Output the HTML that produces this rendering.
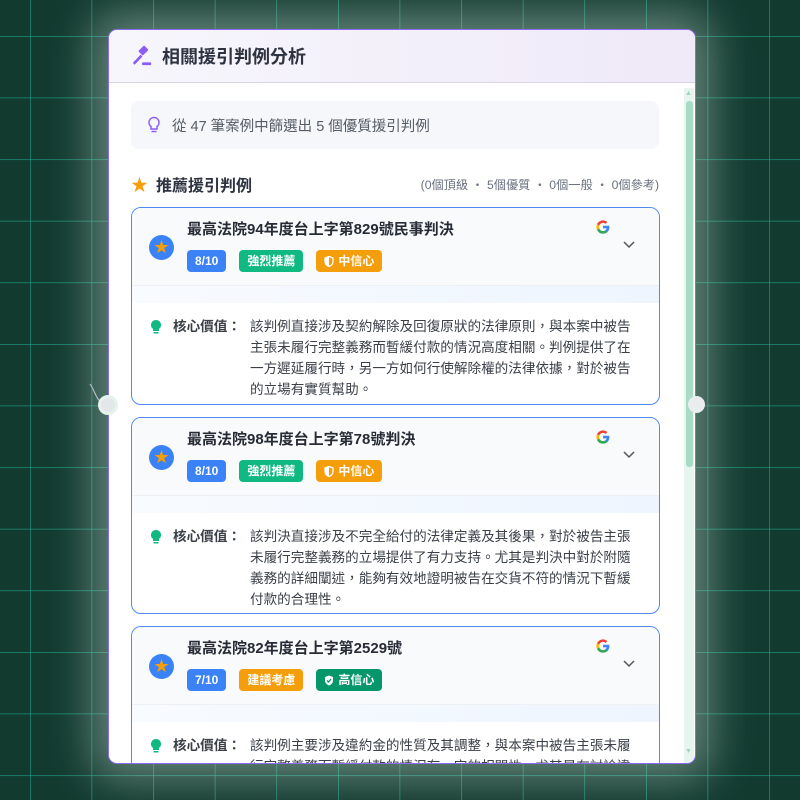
<!DOCTYPE html>
<html><head><meta charset="utf-8">
<style>
*{box-sizing:border-box;margin:0;padding:0}
body{width:800px;height:800px;overflow:hidden;background:#123a2f;font-family:"Liberation Sans","Noto Sans CJK TC",sans-serif;position:relative}
.bg{position:absolute;inset:0}
.panel{position:absolute;left:108px;top:29px;width:588px;height:735px;background:#fff;border:1px solid #8b6cf0;border-radius:9px;overflow:hidden;box-shadow:0 0 44px 16px rgba(220,240,230,.4)}
.hdr{height:53px;background:linear-gradient(90deg,#f7f6fc,#efe9f8);border-bottom:1px solid #d9d6e0;display:flex;align-items:center;padding-left:22px}
.hdr h1{font-size:18px;font-weight:bold;color:#2d3340;margin-left:9px}
.info{position:absolute;left:22px;top:71px;width:528px;height:48px;background:#f5f7fa;border-radius:8px;display:flex;align-items:center;padding-left:16px;font-size:14.5px;color:#555c66}
.sec{position:absolute;left:22px;top:141px;width:528px;display:flex;align-items:center}
.sec b{font-size:16px;color:#2d3340;margin-left:8px}
.sec span{margin-left:auto;font-size:12.2px;color:#6b7280}
.card{position:absolute;left:22px;width:529px;border:1px solid #4f8af0;border-radius:10px;overflow:hidden;background:#fff}
.ch{height:78px;background:#f8fafc;position:relative;border-bottom:1px solid #eef0f4}
.strip{height:17px;background:linear-gradient(90deg,#f8fbff,#eef5ff)}
.title{position:absolute;left:55px;top:10px;font-size:15px;font-weight:bold;color:#262b35}
.sc{position:absolute;left:17px;top:27px;width:25px;height:25px;border-radius:50%;background:#3b82f6;color:#f59e0b;font-size:15px;text-align:center;line-height:25px}
.badges{position:absolute;left:55px;top:42px;display:flex}
.bd{height:22px;border-radius:4px;color:#fff;font-size:12px;font-weight:bold;line-height:22px;padding:0 8px;margin-right:13px;display:flex;align-items:center}
.bd svg{margin-right:4px}
.g{position:absolute;right:48px;top:11px;width:16px;height:16px}
.chev{position:absolute;right:24px;top:33px}
.body{position:relative;padding:13px 0 0 118px;font-size:13.6px;line-height:21px;color:#3a3f48;height:100px}
.lab{position:absolute;left:41px;top:13px;font-weight:bold;color:#3a3f48}
.bulb{position:absolute;left:19px;top:17px}
</style></head><body>
<svg class="bg" width="800" height="800"><defs><pattern id="p" x="30" y="36" width="61.6" height="61.6" patternUnits="userSpaceOnUse"><path d="M0 0V61.6M0 0H61.6" stroke="#22c2a0" stroke-width="1.2" opacity=".75" fill="none"/></pattern></defs><rect width="800" height="800" fill="url(#p)"/></svg>

<svg style="position:absolute;left:88px;top:380px" width="40" height="40"><path d="M2 4 C8 12,8 24,20 24" stroke="#aab" stroke-width="1.2" fill="none"/></svg>

<div class="panel">
<div class="hdr">
<svg width="22" height="22" viewBox="0 0 24 24"><g fill="#8b5cf6"><rect x="10" y="1.5" width="7" height="9" rx="1" transform="rotate(45 13.5 6)"/><path d="M10.5 10.5 L2 19.5 L4 21.5 L12.5 12.5Z"/><rect x="12" y="19" width="10" height="3" rx="1"/></g></svg>
<h1>相關援引判例分析</h1>
</div>
<div class="info"><svg width="14" height="18" viewBox="0 0 14 18"><path d="M7 1.5a5 5 0 0 0-3 9v2.5h6v-2.5a5 5 0 0 0-3-9z" fill="none" stroke="#8b5cf6" stroke-width="1.5"/><path d="M4.5 15.5h5" stroke="#8b5cf6" stroke-width="1.5"/></svg><span style="margin-left:11px">從 47 筆案例中篩選出 5 個優質援引判例</span></div>
<div class="sec"><span style="color:#f59e0b;font-size:17px;margin-left:0">★</span><b>推薦援引判例</b><span>(0個頂級 ・ 5個優質 ・ 0個一般 ・ 0個參考)</span></div>

<div class="card" style="top:177px;height:198px">
<div class="ch"><div class="title">最高法院94年度台上字第829號民事判決</div><div class="sc">★</div>
<div class="badges"><div class="bd" style="background:#3b82f6">8/10</div><div class="bd" style="background:#10b981">強烈推薦</div><div class="bd" style="background:#f59e0b"><svg width="10" height="11" viewBox="0 0 10 11"><path d="M5 .5 9 2v3.5c0 2.5-2 4.3-4 5-2-.7-4-2.5-4-5V2z" fill="none" stroke="#fff" stroke-width="1.3"/><path d="M5 .5V10.5c-2-.7-4-2.5-4-5V2z" fill="#fff"/></svg>中信心</div></div>
<svg class="g" viewBox="0 0 24 24"><path d="M21.6 12.2c0-.7-.1-1.4-.2-2H12v3.9h5.4a4.6 4.6 0 0 1-2 3v2.5h3.2c1.9-1.7 3-4.3 3-7.4z" fill="#4285F4"/><path d="M12 22c2.7 0 5-.9 6.6-2.4l-3.2-2.5c-.9.6-2 1-3.4 1-2.6 0-4.8-1.8-5.6-4.1H3.1v2.6A10 10 0 0 0 12 22z" fill="#34A853"/><path d="M6.4 14a6 6 0 0 1 0-3.9V7.5H3.1a10 10 0 0 0 0 9z" fill="#FBBC05"/><path d="M12 5.9c1.5 0 2.8.5 3.8 1.5l2.8-2.8A10 10 0 0 0 3.1 7.5L6.4 10c.8-2.3 3-4.1 5.6-4.1z" fill="#EA4335"/></svg>
<svg class="chev" width="12" height="8"><path d="M1 1l5 5 5-5" stroke="#555" stroke-width="1.5" fill="none"/></svg></div>
<div class="strip"></div>
<div class="body"><svg class="bulb" width="10" height="14" viewBox="0 0 10 14"><path d="M5 0a5 5 0 0 0-3 9v2h6V9A5 5 0 0 0 5 0z" fill="#10b981"/><rect x="2.5" y="12" width="5" height="1.5" fill="#10b981"/></svg><div class="lab">核心價值：</div>該判例直接涉及契約解除及回復原狀的法律原則，與本案中被告<br>主張未履行完整義務而暫緩付款的情況高度相關。判例提供了在<br>一方遲延履行時，另一方如何行使解除權的法律依據，對於被告<br>的立場有實質幫助。</div>
</div>

<div class="card" style="top:387px;height:197px">
<div class="ch"><div class="title">最高法院98年度台上字第78號判決</div><div class="sc">★</div>
<div class="badges"><div class="bd" style="background:#3b82f6">8/10</div><div class="bd" style="background:#10b981">強烈推薦</div><div class="bd" style="background:#f59e0b"><svg width="10" height="11" viewBox="0 0 10 11"><path d="M5 .5 9 2v3.5c0 2.5-2 4.3-4 5-2-.7-4-2.5-4-5V2z" fill="none" stroke="#fff" stroke-width="1.3"/><path d="M5 .5V10.5c-2-.7-4-2.5-4-5V2z" fill="#fff"/></svg>中信心</div></div>
<svg class="g" viewBox="0 0 24 24"><path d="M21.6 12.2c0-.7-.1-1.4-.2-2H12v3.9h5.4a4.6 4.6 0 0 1-2 3v2.5h3.2c1.9-1.7 3-4.3 3-7.4z" fill="#4285F4"/><path d="M12 22c2.7 0 5-.9 6.6-2.4l-3.2-2.5c-.9.6-2 1-3.4 1-2.6 0-4.8-1.8-5.6-4.1H3.1v2.6A10 10 0 0 0 12 22z" fill="#34A853"/><path d="M6.4 14a6 6 0 0 1 0-3.9V7.5H3.1a10 10 0 0 0 0 9z" fill="#FBBC05"/><path d="M12 5.9c1.5 0 2.8.5 3.8 1.5l2.8-2.8A10 10 0 0 0 3.1 7.5L6.4 10c.8-2.3 3-4.1 5.6-4.1z" fill="#EA4335"/></svg>
<svg class="chev" width="12" height="8"><path d="M1 1l5 5 5-5" stroke="#555" stroke-width="1.5" fill="none"/></svg></div>
<div class="strip"></div>
<div class="body"><svg class="bulb" width="10" height="14" viewBox="0 0 10 14"><path d="M5 0a5 5 0 0 0-3 9v2h6V9A5 5 0 0 0 5 0z" fill="#10b981"/><rect x="2.5" y="12" width="5" height="1.5" fill="#10b981"/></svg><div class="lab">核心價值：</div>該判決直接涉及不完全給付的法律定義及其後果，對於被告主張<br>未履行完整義務的立場提供了有力支持。尤其是判決中對於附隨<br>義務的詳細闡述，能夠有效地證明被告在交貨不符的情況下暫緩<br>付款的合理性。</div>
</div>

<div class="card" style="top:596px;height:200px">
<div class="ch"><div class="title">最高法院82年度台上字第2529號</div><div class="sc">★</div>
<div class="badges"><div class="bd" style="background:#3b82f6">7/10</div><div class="bd" style="background:#f59e0b">建議考慮</div><div class="bd" style="background:#059669"><svg width="10" height="11" viewBox="0 0 10 11"><path d="M5 .5 9 2v3.5c0 2.5-2 4.3-4 5-2-.7-4-2.5-4-5V2z" fill="#fff"/><path d="M3 5.5l1.5 1.5 2.5-3" stroke="#059669" stroke-width="1.3" fill="none"/></svg>高信心</div></div>
<svg class="g" viewBox="0 0 24 24"><path d="M21.6 12.2c0-.7-.1-1.4-.2-2H12v3.9h5.4a4.6 4.6 0 0 1-2 3v2.5h3.2c1.9-1.7 3-4.3 3-7.4z" fill="#4285F4"/><path d="M12 22c2.7 0 5-.9 6.6-2.4l-3.2-2.5c-.9.6-2 1-3.4 1-2.6 0-4.8-1.8-5.6-4.1H3.1v2.6A10 10 0 0 0 12 22z" fill="#34A853"/><path d="M6.4 14a6 6 0 0 1 0-3.9V7.5H3.1a10 10 0 0 0 0 9z" fill="#FBBC05"/><path d="M12 5.9c1.5 0 2.8.5 3.8 1.5l2.8-2.8A10 10 0 0 0 3.1 7.5L6.4 10c.8-2.3 3-4.1 5.6-4.1z" fill="#EA4335"/></svg>
<svg class="chev" width="12" height="8"><path d="M1 1l5 5 5-5" stroke="#555" stroke-width="1.5" fill="none"/></svg></div>
<div class="strip"></div>
<div class="body"><svg class="bulb" width="10" height="14" viewBox="0 0 10 14"><path d="M5 0a5 5 0 0 0-3 9v2h6V9A5 5 0 0 0 5 0z" fill="#10b981"/><rect x="2.5" y="12" width="5" height="1.5" fill="#10b981"/></svg><div class="lab">核心價值：</div>該判例主要涉及違約金的性質及其調整，與本案中被告主張未履<br>行完整義務而暫緩付款的情況有一定的相關性。尤其是在討論違</div>
</div>

<div style="position:absolute;left:575px;top:58px;width:10px;height:676px;background:#e6f5ee"></div>
<div style="position:absolute;left:577px;top:71px;width:7px;height:366px;background:#a8dcc6;border-radius:3px"></div>
<div style="position:absolute;left:576px;top:60px;font-size:7px;color:#9cd4bd">▲</div>
<div style="position:absolute;left:576px;top:718px;font-size:7px;color:#9cd4bd">▼</div>
</div>

<div style="position:absolute;left:98px;top:395px;width:20px;height:20px;border-radius:50%;background:#e4e7ea;border:3px solid #e6f3ec"></div>
<div style="position:absolute;left:688px;top:396px;width:17px;height:17px;border-radius:50%;background:#eaecee"></div>
</body></html>
